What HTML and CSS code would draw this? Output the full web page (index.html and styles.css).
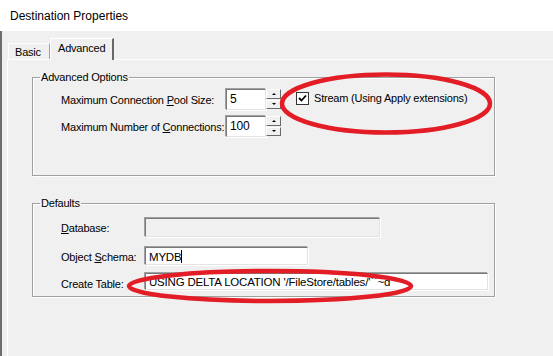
FILE: index.html
```html
<!DOCTYPE html>
<html lang="en">
  <head>
    <meta charset="UTF-8" />
    <title>Destination Properties</title>
    <link rel="stylesheet" href="styles.css">
  </head>
  <body>
    <div class="titlebar">Destination Properties</div>

    <div class="frame">
      <div class="tabs">
        <div class="tab">Basic</div>
        <div class="tab active">Advanced</div>
      </div>

      <div class="panel">
        <fieldset class="group group-options">
          <legend>Advanced Options</legend>
          <div class="options-grid">
            <label>Maximum Connection <u>P</u>ool Size:</label>
            <div class="spin">
              <div class="edit">5</div>
              <div class="spin-btns">
                <div class="spin-btn"><span class="arrow up"></span></div>
                <div class="spin-btn"><span class="arrow down"></span></div>
              </div>
            </div>
            <div class="check-row">
              <span class="checkbox">
                <svg width="9" height="9" viewBox="0 0 9 9">
                  <path d="M1 4 L3.5 6.5 L8 1.5" fill="none" stroke="#000" stroke-width="1.8" />
                </svg>
              </span>
              <span>Stream (Using Apply extensions)</span>
            </div>

            <label>Maximum Number of <u>C</u>onnections:</label>
            <div class="spin">
              <div class="edit">100</div>
              <div class="spin-btns">
                <div class="spin-btn"><span class="arrow up"></span></div>
                <div class="spin-btn"><span class="arrow down"></span></div>
              </div>
            </div>
          </div>
        </fieldset>

        <fieldset class="group group-defaults">
          <legend>Defaults</legend>
          <div class="defaults-grid">
            <label><u>D</u>atabase:</label>
            <div class="edit disabled w-db"></div>

            <label>Object <u>S</u>chema:</label>
            <div class="edit w-schema">MYDB<span class="caret"></span></div>

            <label>Create Table:</label>
            <div class="edit w-table">USING DELTA LOCATION '/FileStore/tables/'``~d</div>
          </div>
        </fieldset>
      </div>
    </div>

    <!-- red marker circles drawn on top of the screenshot -->
    <svg class="marks" width="553" height="356" viewBox="0 0 553 356">
      <ellipse cx="386" cy="103.5" rx="104" ry="29" fill="none" stroke="#e21d26" stroke-width="4.5" />
      <ellipse cx="270" cy="286" rx="141" ry="15" fill="none" stroke="#e21d26" stroke-width="4.5" />
    </svg>
  </body>
</html>
```

FILE: styles.css
```css
* {
  margin: 0;
  padding: 0;
  box-sizing: border-box;
}

body {
  position: relative;
  width: 553px;
  height: 356px;
  overflow: hidden;
  background: #f0f0f0;
  font-family: "Liberation Sans", Arial, sans-serif;
  font-size: 11px;
  letter-spacing: -0.2px;
  color: #000;
}

.titlebar {
  height: 31px;
  line-height: 33px;
  padding-left: 10px;
  background: #fff;
  font-size: 12px;
  letter-spacing: 0;
}

.frame {
  height: 325px;
  border-left: 2px solid #6d6d6d;
}

/* tab strip */
.tabs {
  display: flex;
  align-items: flex-end;
  height: 28px;
  padding-left: 6px;
}

.tab {
  width: 42px;
  height: 16px;
  padding: 2px 0 0 6px;
  border-top: 1px solid #fff;
  border-left: 1px solid #fff;
  border-right: 1px solid #a0a0a0;
  line-height: 13px;
}

.tab.active {
  width: 64px;
  height: 22px;
  margin-bottom: -1px;
  padding: 3px 0 0 7px;
  border-right: 2px solid #696969;
  background: #f0f0f0;
  position: relative;
}

.panel {
  height: 297px;
  margin-left: 5px;
  border-top: 1px solid #fff;
  border-left: 1px solid #fff;
  padding-top: 11px;
  padding-left: 24px;
}

/* group boxes */
.group {
  width: 463px;
  border: 1px solid #a0a0a0;
  box-shadow: 1px 1px 0 #fff, inset 1px 1px 0 #fff;
}

.group legend {
  margin-left: 7px;
  padding: 0 1px;
  line-height: 13px;
}

.group-options {
  height: 105px;
}

.group-defaults {
  height: 100px;
  margin-top: 21px;
}

.options-grid {
  display: grid;
  grid-template-columns: 165px auto auto;
  justify-content: start;
  row-gap: 6px;
  align-items: center;
  margin: 5px 0 0 28px;
}

.defaults-grid {
  display: grid;
  grid-template-columns: 84px auto;
  justify-content: start;
  row-gap: 12px;
  align-items: center;
  justify-items: start;
  margin: 8px 0 0 28px;
}

label {
  white-space: nowrap;
}

/* edit controls */
.edit {
  height: 20px;
  padding: 2px 3px;
  background: #fff;
  border-top: 1px solid #7a7a7a;
  border-left: 1px solid #7a7a7a;
  border-right: 1px solid #e3e3e3;
  border-bottom: 1px solid #e3e3e3;
  box-shadow: -1px -1px 0 #a0a0a0, 1px 1px 0 #fff;
  line-height: 15px;
  white-space: nowrap;
  overflow: hidden;
}

.edit.disabled {
  background: #f0f0f0;
}

.w-db {
  width: 235px;
  height: 19px;
}

.w-schema {
  width: 163px;
  height: 18px;
  margin-top: -2px;
  font-size: 11.5px;
}

.w-table {
  width: 343px;
  height: 17px;
  margin-top: -4px;
  line-height: 13px;
  font-size: 11.5px;
}

.caret {
  display: inline-block;
  width: 1px;
  height: 13px;
  background: #000;
  vertical-align: -2px;
}

/* spin boxes */
.spin {
  display: flex;
  height: 21px;
}

.spin .edit {
  width: 40px;
  height: 21px;
  font-size: 12px;
}

.spin-btns {
  display: flex;
  flex-direction: column;
}

.spin-btn {
  display: flex;
  align-items: center;
  justify-content: center;
  width: 15px;
  height: 10px;
  margin-bottom: 1px;
  background: #f0f0f0;
  border-top: 1px solid #fff;
  border-left: 1px solid #fff;
  border-right: 1px solid #696969;
  border-bottom: 1px solid #696969;
}

.arrow {
  width: 0;
  height: 0;
  border-left: 2px solid transparent;
  border-right: 2px solid transparent;
}

.arrow.up {
  border-bottom: 2px solid #000;
}

.arrow.down {
  border-top: 2px solid #000;
}

/* checkbox */
.check-row {
  display: flex;
  align-items: center;
  gap: 5px;
  margin-left: 15px;
  margin-top: -3px;
}

.checkbox {
  display: flex;
  align-items: center;
  justify-content: center;
  width: 13px;
  height: 13px;
  background: #fff;
  border: 1px solid #333;
}

.marks {
  position: absolute;
  left: 0;
  top: 0;
  pointer-events: none;
}
```
